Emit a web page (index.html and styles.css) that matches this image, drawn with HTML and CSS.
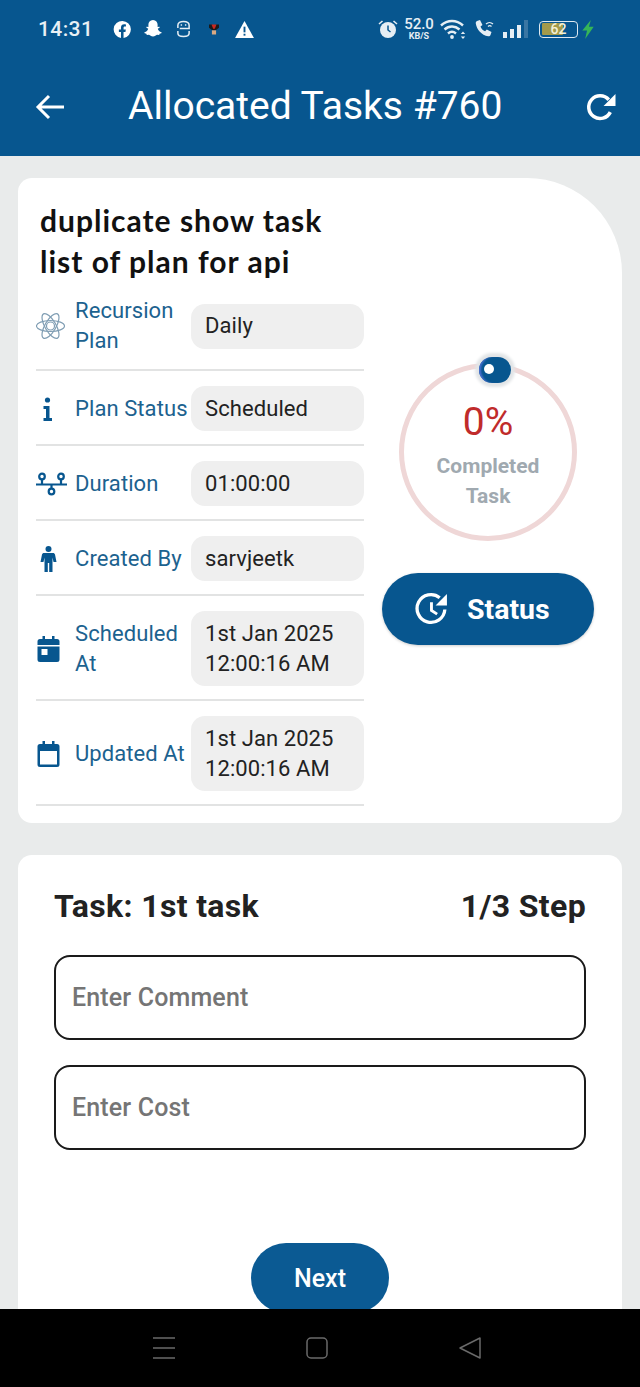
FILE: index.html
```html
<!DOCTYPE html>
<html lang="en">

<head>
    <meta charset="UTF-8">
    <meta name="viewport" content="width=device-width, initial-scale=1.0">
    <title>Allocated Tasks</title>
    <link rel="stylesheet" href="styles.css">
</head>

<body>
    <div class="screen">
        <header class="app-header">
            <div class="status-bar">
                <span class="clock">14:31</span>
                <svg class="st-icon fb" viewBox="0 0 20 20"><path fill="#fff" d="M10 1a9 9 0 0 0-1.6 17.9v-6.3H6.2V10h2.2V8c0-2.3 1.3-3.5 3.3-3.5.9 0 1.9.2 1.9.2v2.2h-1.1c-1.1 0-1.4.7-1.4 1.4V10h2.4l-.4 2.6h-2v6.3A9 9 0 0 0 10 1z"/></svg>
                <svg class="st-icon snap" viewBox="0 0 20 20"><path fill="#fff" d="M10 1c3 0 4.6 2.2 4.6 4.8v2.3l1.5-.3c.6 0 .8.7.3 1l-1.6.9c.5 1.7 1.7 3 3.6 3.6.4.2.3.7-.1.9l-1.7.5-.4 1.2-2.2-.1c-1.2.3-2 1.6-4 1.6s-2.8-1.300-4-1.6l-2.2.1-.4-1.2-1.7-.5c-.4-.2-.5-.7-.1-.9 1.900-.6 3.100-1.900 3.600-3.600l-1.600-.9c-.5-.3-.3-1 .3-1l1.500.3V5.800C5.400 3.200 7 1 10 1z"/></svg>
                <svg class="st-icon mask" viewBox="0 0 16 18"><path fill="none" stroke="#e6eef4" stroke-width="1.6" d="M2 8V5C2 2.500 4.500 1 8 1s6 1.500 6 4v3.500H4M2 11v2.500C2 15.500 4.500 17 8 17s6-1.500 6-3.500V11"/><path fill="#e6eef4" d="M5 4h1.500v1.500H5zM9.500 4H11v1.500H9.500z"/></svg>
                <svg class="st-icon toy" viewBox="0 0 12 14"><path fill="#1a1a1a" d="M0 1h4l2 3 2-3h4v4L8 8H4L0 5z"/><path fill="#c9281f" d="M3 1h6L7 6H5z"/><rect x="3.500" y="8" width="5" height="5" fill="#d9a983"/></svg>
                <svg class="st-icon warn" viewBox="0 0 20 18"><path fill="#fff" d="M10 0l10 18H0z"/><rect x="9" y="6" width="2" height="6" fill="#07568f"/><rect x="9" y="13.500" width="2" height="2" fill="#07568f"/></svg>

                <svg class="st-icon alarm" viewBox="0 0 20 20"><circle cx="10" cy="11" r="8" fill="#e6eef4"/><path fill="none" stroke="#07568f" stroke-width="1.5" d="M10 6.500V11l2.500 2"/><path fill="none" stroke="#e6eef4" stroke-width="1.6" d="M1 5l3.500-3M19 5l-3.500-3"/></svg>
                <span class="speed"><b>52.0</b><i>KB/S</i></span>
                <svg class="st-icon wifi" viewBox="0 0 26 20"><path fill="none" stroke="#e6eef4" stroke-width="2.4" d="M1 6.500c6.500-6 15.500-6 22 0M4.500 10.500c4.500-4 10.500-4 15 0M8 14.500c2.500-2.200 5.500-2.200 8 0"/><circle cx="12" cy="18" r="1.9" fill="#e6eef4"/><path fill="#e6eef4" d="M23 12.500l2.200 2.500h-4.400zM23 20l-2.200-2.500h4.400z"/></svg>
                <svg class="st-icon call" viewBox="0 0 22 20"><path fill="#e6eef4" d="M3 2l3-1 2.500 5-2 1.500c.7 2.200 2.400 4 4.600 4.800l1.700-1.900 4.700 2.700-1 3c-.3.900-1.300 1.400-2.300 1.200C7.500 16 2.800 10.800 1.800 4.500 1.600 3.400 2.100 2.400 3 2z"/><path fill="none" stroke="#e6eef4" stroke-width="1.2" d="M12 5c2-2 5-2 7 0M14 7.500c1-1 2.500-1 3.500 0"/></svg>
                <div class="signal">
                    <span class="bar b1"></span>
                    <span class="bar b2"></span>
                    <span class="bar b3"></span>
                    <span class="bar b4"></span>
                </div>
                <div class="battery"><span class="battery-fill"></span><span class="battery-num">62</span></div>
                <svg class="st-icon bolt" viewBox="0 0 12 20"><path fill="#35b558" d="M9 0L0 11h5l-2 9 9-13H7z"/></svg>
            </div>

            <div class="toolbar">
                <svg class="back" viewBox="0 0 30 26"><path fill="none" stroke="#fff" stroke-width="3" d="M29 13H3M14 2L3 13l11 11"/></svg>
                <h1 class="toolbar-title">Allocated Tasks #760</h1>
                <svg class="refresh" viewBox="0 0 30 30"><path fill="none" stroke="#fff" stroke-width="3.4" d="M24.500 19.500A11 11 0 1 1 23 7.500"/><path fill="#fff" d="M29.500 2v11.500H18z"/></svg>
            </div>
        </header>

        <main class="content">
            <section class="card plan-card">
                <div class="plan-left">
                    <h2 class="plan-title">duplicate show task list of plan for api</h2>

                    <div class="row">
                        <svg class="row-icon" viewBox="1 0 30 28"><g fill="none" stroke="#7f9db3" stroke-width="1.2"><ellipse cx="15" cy="14" rx="14" ry="5.500"/><ellipse cx="15" cy="14" rx="14" ry="5.500" transform="rotate(60 15 14)"/><ellipse cx="15" cy="14" rx="14" ry="5.500" transform="rotate(120 15 14)"/><circle cx="15" cy="14" r="4"/></g></svg>
                        <span class="row-label">Recursion Plan</span>
                        <span class="row-value">Daily</span>
                    </div>
                    <div class="row">
                        <svg class="row-icon" viewBox="4 0 30 28"><circle cx="15" cy="5" r="2.600" fill="#07568f"/><path fill="#07568f" d="M11 11h6v12h2.500v3h-8.500v-3h2.500v-9H11z"/></svg>
                        <span class="row-label">Plan Status</span>
                        <span class="row-value">Scheduled</span>
                    </div>
                    <div class="row">
                        <svg class="row-icon" viewBox="0 0 31 23"><g fill="none" stroke="#07568f" stroke-width="2.2"><circle cx="6" cy="4" r="2.800"/><circle cx="25" cy="4" r="2.800"/><circle cx="15.500" cy="19" r="2.800"/><path d="M6 7v5M25 7v5M15.500 12v4M0 12h31"/></g></svg>
                        <span class="row-label">Duration</span>
                        <span class="row-value">01:00:00</span>
                    </div>
                    <div class="row">
                        <svg class="row-icon" viewBox="3 0 30 28"><circle cx="15" cy="4" r="3" fill="#07568f"/><path fill="#07568f" d="M10.500 8h9c1 0 1.800.7 2 1.600l1.500 7.400h-3l-1-4.500V27h-3.300v-9h-1.400v9h-3.300V12.500l-1 4.500H7l1.500-7.400c.2-.9 1-1.600 2-1.600z"/></svg>
                        <span class="row-label">Created By</span>
                        <span class="row-value">sarvjeetk</span>
                    </div>
                    <div class="row">
                        <svg class="row-icon" viewBox="3 0 30 28"><path fill="#07568f" fill-rule="evenodd" d="M9 1h2.500v3h7V1H21v3h2.500A2.500 2.500 0 0 1 26 6.500v18a2.500 2.500 0 0 1-2.500 2.500h-17A2.500 2.500 0 0 1 4 24.500v-18A2.500 2.500 0 0 1 6.500 4H9zM4 10v1.500h22V10zM8 14v6h6v-6z"/></svg>
                        <span class="row-label">Scheduled At</span>
                        <span class="row-value">1st Jan 2025 12:00:16 AM</span>
                    </div>
                    <div class="row">
                        <svg class="row-icon" viewBox="3 0 30 28"><path fill="#07568f" fill-rule="evenodd" d="M9 1h2.500v3h7V1H21v3h2.500A2.500 2.500 0 0 1 26 6.500v18a2.500 2.500 0 0 1-2.500 2.500h-17A2.500 2.500 0 0 1 4 24.500v-18A2.500 2.500 0 0 1 6.500 4H9zM6.500 11v13.500h17V11z"/></svg>
                        <span class="row-label">Updated At</span>
                        <span class="row-value">1st Jan 2025 12:00:16 AM</span>
                    </div>
                </div>

                <div class="plan-right">
                    <div class="progress">
                        <span class="progress-knob"><span class="progress-dot"></span></span>
                        <span class="progress-num">0%</span>
                        <span class="progress-label">Completed Task</span>
                    </div>
                    <button class="status-btn">
                        <svg class="status-icon" viewBox="0 0 34 34"><path fill="none" stroke="#fff" stroke-width="3.2" d="M29 17A13.500 13.500 0 1 1 24 5.500"/><path fill="#fff" d="M31 2v11H20z"/><path fill="none" stroke="#fff" stroke-width="2.8" d="M16 10v8l5.500 3.500"/></svg>
                        Status
                    </button>
                </div>
            </section>

            <section class="card task-card">
                <div class="task-head">
                    <span>Task: 1st task</span>
                    <span>1/3 Step</span>
                </div>
                <input class="field" type="text" placeholder="Enter Comment">
                <input class="field" type="text" placeholder="Enter Cost">
                <button class="next-btn">Next</button>
            </section>
        </main>

        <nav class="nav-bar">
            <svg class="nav-icon" viewBox="0 0 24 22"><path fill="none" stroke="#6a6a6a" stroke-width="1.5" d="M1 1h22M1 11h22M1 21h22"/></svg>
            <svg class="nav-icon" viewBox="0 0 24 22"><rect x="2" y="1" width="20" height="20" rx="4" fill="none" stroke="#6a6a6a" stroke-width="1.5"/></svg>
            <svg class="nav-icon" viewBox="0 0 24 22"><path fill="none" stroke="#6a6a6a" stroke-width="1.5" stroke-linejoin="round" d="M22 1v20L2 11z"/></svg>
        </nav>
    </div>
</body>

</html>
```

FILE: styles.css
```css
* {
    margin: 0;
    padding: 0;
    box-sizing: border-box;
}

body {
    width: 640px;
    height: 1387px;
    overflow: hidden;
    font-family: Roboto, "Noto Sans", sans-serif;
    background-color: #e9ebeb;
}

.screen {
    display: flex;
    flex-direction: column;
    height: 1387px;
}

/* top blue area */
.app-header {
    flex: none;
    height: 156px;
    background-color: #07568f;
    color: #fff;
}

.status-bar {
    display: flex;
    align-items: center;
    height: 58px;
    padding-left: 38px;
}

.clock {
    width: 53px;
    margin-right: 22px;
    font-size: 21px;
    font-weight: 500;
    color: #e9f0f5;
    letter-spacing: .4px;
}

.st-icon {
    flex: none;
    display: block;
}

.fb { width: 19px; height: 19px; margin-right: 11px; }
.snap { width: 20px; height: 20px; margin-right: 13px; }
.mask { width: 15px; height: 18px; margin-right: 18px; }
.toy { width: 10px; height: 13px; margin-right: 16px; }
.warn { width: 19px; height: 17px; margin-right: 124px; }
.alarm { width: 20px; height: 20px; margin-right: 6px; }
.wifi { width: 26px; height: 20px; margin-left: 6px; margin-right: 8px; }
.call { width: 22px; height: 20px; margin-right: 7px; }
.bolt { width: 12px; height: 19px; margin-left: 4px; }

.speed {
    display: flex;
    flex-direction: column;
    align-items: center;
    width: 30px;
    color: #e6eef4;
}

.speed b {
    font-size: 15px;
    line-height: 13px;
    font-weight: 500;
}

.speed i {
    font-size: 9px;
    line-height: 10px;
    font-style: normal;
    font-weight: 700;
}

.signal {
    display: flex;
    align-items: flex-end;
    gap: 3px;
    height: 18px;
    margin-right: 11px;
}

.bar {
    width: 4px;
    background-color: #e6eef4;
}

.b1 { height: 6px; }
.b2 { height: 9px; }
.b3 { height: 13px; }
.b4 { height: 18px; background-color: #3a76a3; }

.battery {
    position: relative;
    width: 39px;
    height: 17px;
    border: 1.5px solid #dfe9f0;
    border-radius: 4px;
    padding: 1.5px;
}

.battery-fill {
    display: block;
    width: 62%;
    height: 100%;
    border-radius: 1px;
    background-color: #a39a4b;
}

.battery-num {
    position: absolute;
    top: 0;
    left: 0;
    width: 100%;
    font-size: 14px;
    line-height: 14px;
    font-weight: 500;
    text-align: center;
    color: #f3f1d8;
}

.toolbar {
    display: flex;
    align-items: center;
    height: 98px;
    padding: 0 24px 0 35px;
}

.back {
    flex: none;
    width: 30px;
    height: 26px;
}

.toolbar-title {
    margin-left: 63px;
    margin-bottom: 3px;
    font-size: 39px;
    font-weight: 400;
    white-space: nowrap;
}

.refresh {
    flex: none;
    width: 31px;
    height: 31px;
    margin-left: auto;
}

/* page body, cut off by the nav bar */
.content {
    flex: 1;
    min-height: 0;
    overflow: hidden;
    display: flex;
    flex-direction: column;
    gap: 32px;
    padding: 22px 18px 0;
}

.card {
    flex: none;
    background-color: #fff;
    border-radius: 14px;
}

.plan-card {
    display: flex;
    align-items: center;
    gap: 18px;
    padding: 22px 0 17px 18px;
    border-top-right-radius: 95px;
}

.plan-left {
    width: 328px;
}

.plan-title {
    width: 310px;
    margin-left: 4px;
    margin-bottom: -1px;
    font-family: Lato, sans-serif;
    font-size: 30px;
    line-height: 41px;
    font-weight: 700;
    letter-spacing: 1px;
    color: #111;
}

.row {
    display: flex;
    align-items: center;
    padding: 15px 0 13px;
    border-bottom: 2px solid #e2e3e3;
}

.row-icon {
    flex: none;
    width: 31px;
    height: 28px;
    margin-right: 8px;
}

.row-label {
    flex: none;
    width: 116px;
    font-size: 22px;
    line-height: 30px;
    letter-spacing: .08px;
    color: #1c628f;
}

.row-value {
    flex: none;
    width: 173px;
    padding: 7.5px 14px;
    font-size: 22px;
    line-height: 30px;
    letter-spacing: .08px;
    color: #222;
    background-color: #efefef;
    border-radius: 14px;
}

.plan-right {
    display: flex;
    flex-direction: column;
    align-items: center;
    gap: 32px;
    width: 212px;
    margin-top: 2px;
}

.progress {
    position: relative;
    display: flex;
    flex-direction: column;
    align-items: center;
    width: 178px;
    height: 178px;
    padding-top: 32px;
    border: 5px solid #efd7d7;
    border-radius: 50%;
}

.progress-knob {
    position: absolute;
    top: -11px;
    left: 75px;
    width: 32px;
    height: 26px;
    border-radius: 13px;
    background-color: #07568f;
    box-shadow: inset 3px 0 2px -1px #4a6fd0, 0 0 3px 4px #e2e5e7;
}

.progress-dot {
    position: absolute;
    top: 7px;
    left: 5px;
    width: 10px;
    height: 10px;
    border-radius: 50%;
    background-color: #fff;
}

.progress-num {
    font-size: 39px;
    line-height: 44px;
    color: #c02b2b;
}

.progress-label {
    width: 120px;
    margin-top: 7px;
    font-size: 21px;
    line-height: 30px;
    font-weight: 700;
    text-align: center;
    color: #a0a9b0;
}

.status-btn {
    display: flex;
    align-items: center;
    gap: 17px;
    width: 212px;
    height: 72px;
    padding-left: 33px;
    border: 0;
    border-radius: 36px;
    background-color: #07568f;
    font-family: inherit;
    font-size: 28.5px;
    font-weight: 700;
    color: #fff;
    box-shadow: 0 1px 3px rgba(0, 0, 0, 0.2);
}

.status-icon {
    flex: none;
    width: 35px;
    height: 35px;
}

.task-card {
    display: flex;
    flex-direction: column;
    height: 480px;
    padding: 31px 36px 0;
}

.task-head {
    display: flex;
    justify-content: space-between;
    margin-bottom: 28px;
    font-size: 32px;
    line-height: 41px;
    font-weight: 700;
    letter-spacing: .35px;
    color: #222;
}

.field {
    width: 100%;
    height: 85px;
    margin-bottom: 25px;
    padding: 0 16px;
    border: 2px solid #1a1a1a;
    border-radius: 16px;
    outline: none;
    font-family: inherit;
    font-size: 25px;
    font-weight: 500;
    letter-spacing: .15px;
}

.field::placeholder {
    color: #757575;
}

.next-btn {
    flex: none;
    align-self: center;
    width: 138px;
    height: 70px;
    margin-top: 68px;
    border: 0;
    border-radius: 35px;
    background-color: #0b5a93;
    font-family: inherit;
    font-size: 25px;
    font-weight: 500;
    color: #fff;
}

/* android nav */
.nav-bar {
    flex: none;
    display: flex;
    justify-content: center;
    align-items: center;
    gap: 129px;
    height: 78px;
    padding-right: 7px;
    background-color: #000;
}

.nav-icon {
    width: 24px;
    height: 22px;
}
```
